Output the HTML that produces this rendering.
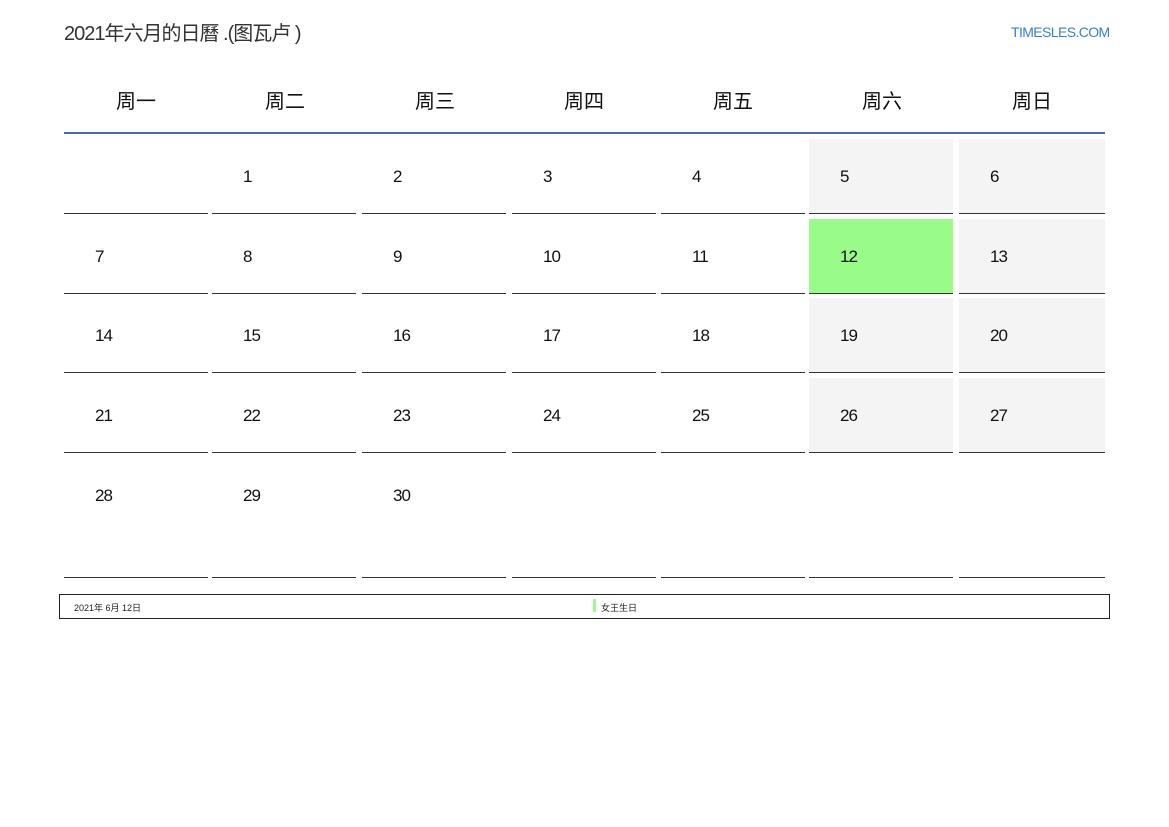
<!DOCTYPE html>
<html><head><meta charset="utf-8"><style>
*{margin:0;padding:0;box-sizing:border-box}
body{width:1169px;height:827px;background:#fff;position:relative;font-family:"Liberation Sans","Noto Sans CJK SC",sans-serif;color:#222;overflow:hidden}
.a{position:absolute}
.title{left:64px;top:17px;font-size:20px;color:#333;letter-spacing:-1px}
.brand{left:1011px;top:24px;font-size:14px;color:#3a7fc6;letter-spacing:-0.6px}
.hd{top:85px;width:144px;text-align:center;font-size:20px;color:#111}
.line{left:64px;top:132px;width:1041px;height:2px;background:#4a6f9c}
.c{width:144px;border-bottom:1px solid #333}
.c span{position:absolute;left:31px;top:28px;font-size:17px;color:#111;letter-spacing:-1px}
.we{background:#f4f4f4}
.hl{background:#99fc88}
.foot{left:59px;top:594px;width:1051px;height:25px;border:1px solid #222;font-size:9px}
</style></head><body>
<div class="a title">2021年六月的日曆 .(图瓦卢 )</div>
<div class="a brand">TIMESLES.COM</div>
<div class="a hd" style="left:64px">周一</div>
<div class="a hd" style="left:213px">周二</div>
<div class="a hd" style="left:363px">周三</div>
<div class="a hd" style="left:512px">周四</div>
<div class="a hd" style="left:661px">周五</div>
<div class="a hd" style="left:810px">周六</div>
<div class="a hd" style="left:960px">周日</div>
<div class="a line"></div>
<div id="g"></div>
<script>
var xs=[64,212,362,512,661,809,959],rows=[[139,75],[219,75],[298,75],[378,75],[458,120]];
var h='';
for(var r=0;r<5;r++)for(var c=0;c<7;c++){
var i=r*7+c-1,t='';
if(i>=0&&i<30)t=i+1;
var cls='a c';
if(c>=5&&t!=='')cls+=(t===12?' hl':' we');
h+='<div class="'+cls+'" style="left:'+xs[c]+'px;top:'+rows[r][0]+'px;height:'+rows[r][1]+'px;width:'+(c==6?146:144)+'px">'+(t!==''?'<span>'+t+'</span>':'')+'</div>';
}
document.getElementById('g').innerHTML=h;
</script>
<div class="a foot"><span class="a" style="left:14px;top:6px">2021年 6月 12日</span><span class="a" style="left:533px;top:4px;width:3px;height:13px;background:#99fc88"></span><span class="a" style="left:541px;top:6px">女王生日</span></div>
</body></html>
